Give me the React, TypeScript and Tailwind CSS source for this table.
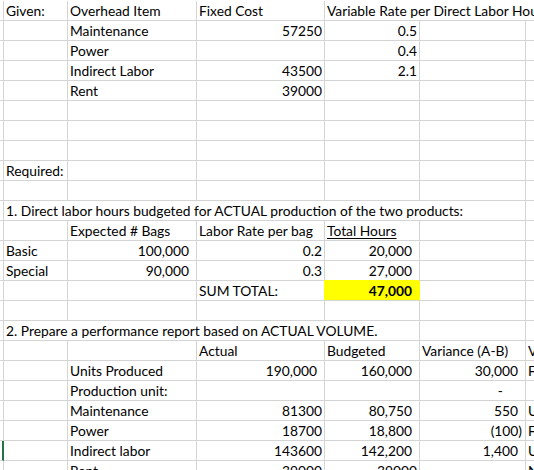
import React from 'react';

type Kind = 'l' | 'g' | 'a' | 'n' | 'd';
type Cell = { t: string; k?: Kind; b?: boolean; u?: boolean; y?: boolean };
type Row = { cells: Record<number, Cell>; hide?: number[]; green?: boolean };

const colW = ['w-[4px]', 'w-[64px]', 'w-[129px]', 'w-[128px]', 'w-[95px]', 'w-[106px]', 'w-[80px]'];

const kindCls: Record<Kind, string> = {
  l: 'justify-start pl-[2px]',
  g: 'justify-end pr-[2px]',
  a: 'justify-end pr-[7px]',
  n: 'justify-end pr-[3px]',
  d: 'justify-end pr-[22px]',
};

const rows: Row[] = [
  {
    cells: {
      1: { t: 'Given:' },
      2: { t: 'Overhead Item' },
      3: { t: 'Fixed Cost' },
      4: { t: 'Variable Rate per Direct Labor Hours' },
    },
    hide: [4, 5],
  },
  { cells: { 2: { t: 'Maintenance' }, 3: { t: '57250', k: 'g' }, 4: { t: '0.5', k: 'g' } } },
  { cells: { 2: { t: 'Power' }, 4: { t: '0.4', k: 'g' } } },
  { cells: { 2: { t: 'Indirect Labor' }, 3: { t: '43500', k: 'g' }, 4: { t: '2.1', k: 'g' } } },
  { cells: { 2: { t: 'Rent' }, 3: { t: '39000', k: 'g' } } },
  { cells: {} },
  { cells: {} },
  { cells: {} },
  { cells: { 1: { t: 'Required:' } } },
  { cells: {} },
  {
    cells: { 1: { t: '1. Direct labor hours budgeted for ACTUAL production of the two products:' } },
    hide: [1, 2, 3, 4],
  },
  {
    cells: {
      2: { t: 'Expected # Bags' },
      3: { t: 'Labor Rate per bag' },
      4: { t: 'Total Hours', u: true },
    },
  },
  {
    cells: {
      1: { t: 'Basic' },
      2: { t: '100,000', k: 'a' },
      3: { t: '0.2', k: 'g' },
      4: { t: '20,000', k: 'a' },
    },
  },
  {
    cells: {
      1: { t: 'Special' },
      2: { t: '90,000', k: 'a' },
      3: { t: '0.3', k: 'g' },
      4: { t: '27,000', k: 'a' },
    },
  },
  {
    cells: {
      3: { t: 'SUM TOTAL:' },
      4: { t: '47,000', k: 'a', b: true, y: true },
    },
  },
  { cells: {} },
  {
    cells: { 1: { t: '2. Prepare a performance report based on ACTUAL VOLUME.' } },
    hide: [1, 2, 3],
  },
  {
    cells: {
      3: { t: 'Actual' },
      4: { t: 'Budgeted' },
      5: { t: 'Variance (A-B)' },
      6: { t: 'Variance' },
    },
  },
  {
    cells: {
      2: { t: 'Units Produced' },
      3: { t: '190,000', k: 'a' },
      4: { t: '160,000', k: 'a' },
      5: { t: '30,000', k: 'a' },
      6: { t: 'F' },
    },
  },
  { cells: { 2: { t: 'Production unit:' }, 5: { t: '-', k: 'd' } } },
  {
    cells: {
      2: { t: 'Maintenance' },
      3: { t: '81300', k: 'g' },
      4: { t: '80,750', k: 'a' },
      5: { t: '550', k: 'a' },
      6: { t: 'U' },
    },
  },
  {
    cells: {
      2: { t: 'Power' },
      3: { t: '18700', k: 'g' },
      4: { t: '18,800', k: 'a' },
      5: { t: '(100)', k: 'n' },
      6: { t: 'F' },
    },
  },
  {
    cells: {
      2: { t: 'Indirect labor' },
      3: { t: '143600', k: 'g' },
      4: { t: '142,200', k: 'a' },
      5: { t: '1,400', k: 'a' },
      6: { t: 'U' },
    },
    green: true,
  },
  {
    cells: {
      2: { t: 'Rent' },
      3: { t: '39000', k: 'g' },
      4: { t: '39000', k: 'g' },
      6: { t: 'N' },
    },
  },
  { cells: {} },
];

function SheetRow({ row }: { row: Row }) {
  return (
    <div className="flex">
      {colW.map((w, i) => {
        const cell = row.cells[i];
        const hidden = row.hide?.includes(i);
        const kind: Kind = cell?.k ?? 'l';
        let border = 'border-r border-[#d4d4d4]';
        if (hidden) border = 'border-r-0 border-[#d4d4d4]';
        if (i === 0 && row.green) border = 'border-r-2 border-r-[#217346] border-b-[#d4d4d4]';
        if (cell?.y) border = 'border-r border-r-[#ffff00] border-b-[#d4d4d4] bg-[#ffff00] shadow-[-1px_-1px_0_0_#ffff00]';
        return (
          <div
            key={i}
            className={`${w} ${border} ${kindCls[kind]} shrink-0 h-[20px] border-b flex items-end whitespace-nowrap leading-[19px]`}
          >
            {cell ? (
              <span
                className={`${cell.b ? 'font-bold' : ''} ${cell.u ? 'underline decoration-1 underline-offset-2' : ''}`}
              >
                {cell.t}
              </span>
            ) : null}
          </div>
        );
      })}
    </div>
  );
}

export default function App() {
  return (
    <div className="w-[534px] h-[470px] overflow-hidden bg-white pt-px font-['Lato',sans-serif] text-[13.8px] text-black">
      <div className="flex flex-col">
        {rows.map((r, idx) => (
          <SheetRow key={idx} row={r} />
        ))}
      </div>
    </div>
  );
}
